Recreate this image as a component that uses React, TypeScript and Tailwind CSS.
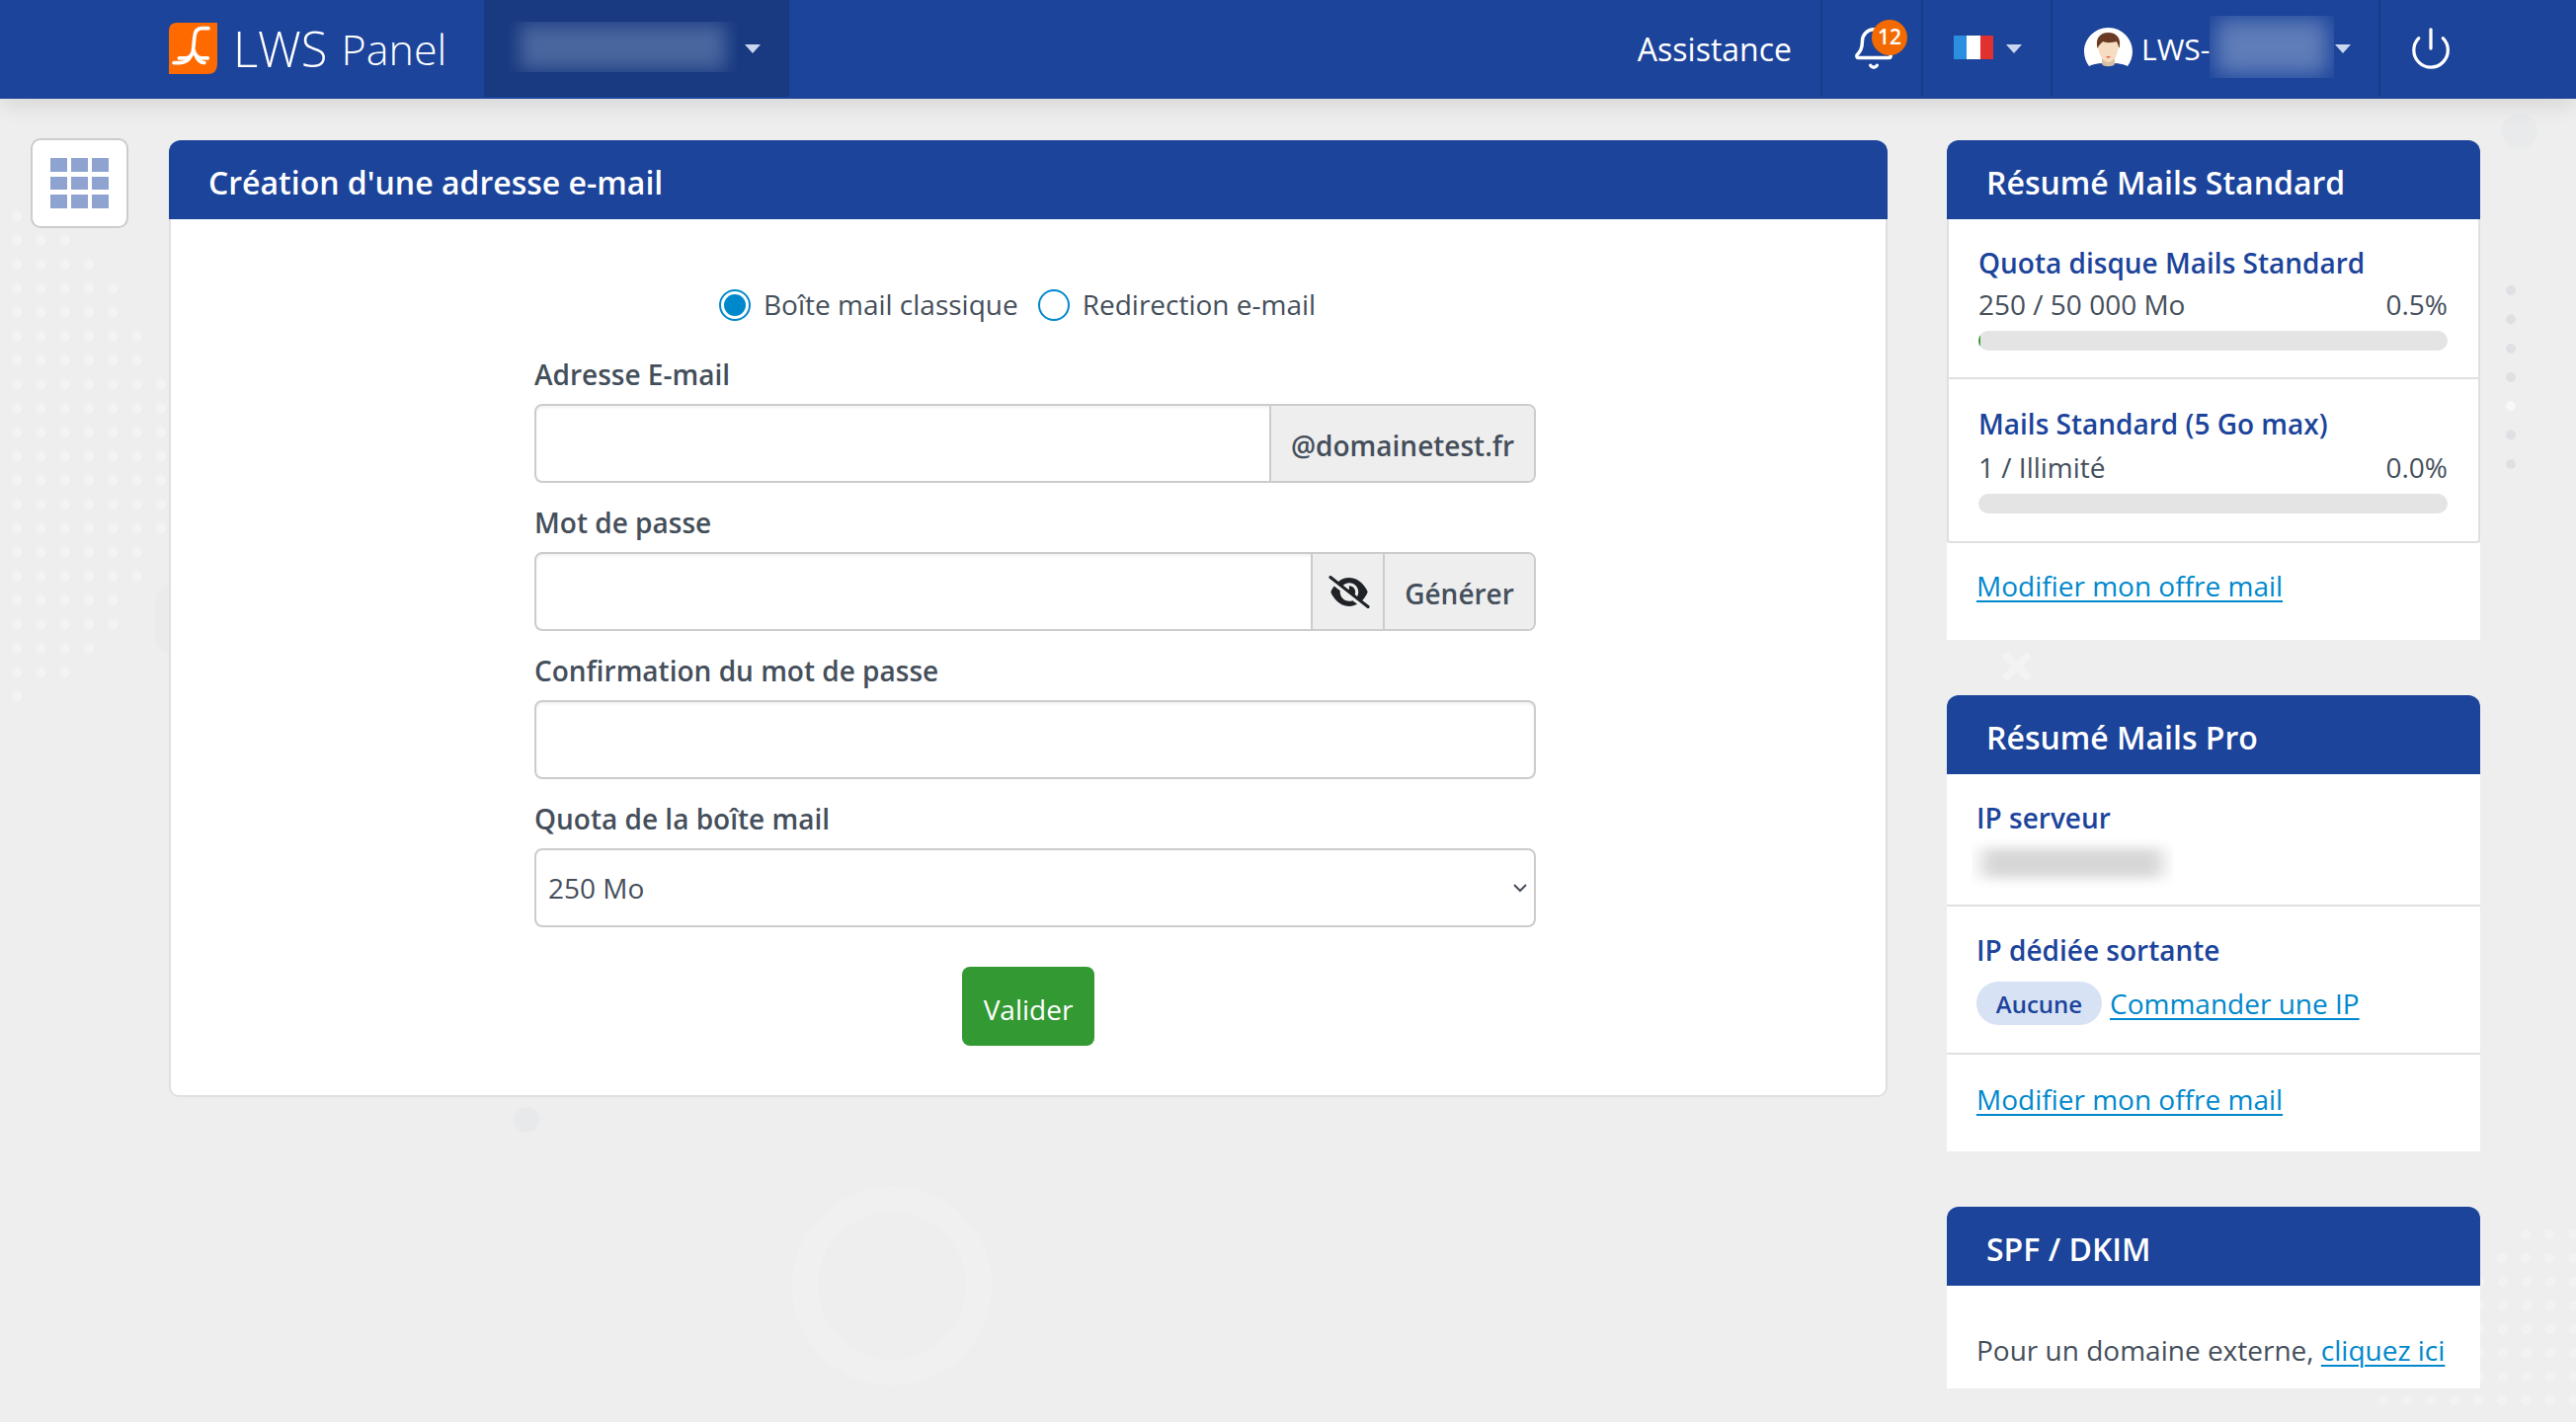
import React from "react";
import { Bell, Power } from "lucide-react";
import { FaEyeSlash } from "react-icons/fa6";

const leftRows = [1, 3, 4, 5, 5, 6, 6, 7, 7, 7, 7, 7, 7, 7, 6, 6, 5, 5, 4, 3, 1];
const rightRows: [number, number][] = [
  [1250, 2557], [1274, 2533], [1298, 2510], [1322, 2510], [1346, 2510], [1370, 2510], [1394, 2510], [1418, 2413],
];

function Decor() {
  const dots: React.ReactNode[] = [];
  leftRows.forEach((n, r) => {
    for (let c = 0; c < n; c++) {
      dots.push(<circle key={`l${r}-${c}`} cx={17 + c * 24.3} cy={219 + r * 24.3} r={5.2} fill="#f3f3f3" />);
    }
  });
  rightRows.forEach(([y, x0], r) => {
    for (let x = x0; x < 2620; x += 24.1) {
      dots.push(<circle key={`r${r}-${x}`} cx={x} cy={y} r={5.2} fill="#f2f2f2" />);
    }
  });
  [294, 323.5, 353, 382, 411, 440.5, 470].forEach((y) => {
    dots.push(<circle key={`c${y}`} cx={2542} cy={y} r={5} fill={y === 411 ? "#f8f8f8" : "#e0e0e4"} />);
  });
  return (
    <svg className="absolute inset-0 pointer-events-none" width="2608" height="1440" viewBox="0 0 2608 1440">
      {dots}
      <circle cx="2551" cy="133" r="18" fill="#e9eaec" />
      <circle cx="533" cy="1134" r="13" fill="#e8e9eb" />
      <circle cx="903" cy="1302" r="88" fill="none" stroke="#f0f0f0" strokeWidth="26" />
      <circle cx="635" cy="1010" r="190" fill="none" stroke="#efefef" strokeWidth="3" />
      <rect x="157" y="592" width="60" height="70" rx="18" fill="#ebebee" />
      <path d="M2032 665l20 20M2052 665l-20 20" stroke="#f3f3f3" strokeWidth="8" strokeLinecap="round" />
    </svg>
  );
}

function Caret() {
  return (
    <svg width="16" height="9" viewBox="0 0 16 9" className="shrink-0">
      <polygon points="0,0 16,0 8,9" fill="#c9d6ef" />
    </svg>
  );
}

function Logo() {
  return (
    <svg width="49" height="52" viewBox="33 35 146 155" className="shrink-0">
      <path d="M58 35H179V160Q179 190 149 190H33V60Q33 35 58 35Z" fill="#ff6a00" />
      <g fill="none" stroke="#fff" strokeWidth="11" strokeLinecap="round">
        <path d="M152 52H132Q112 52 110 80L106 118Q104 138 84 142H64" />
        <path d="M108 118Q112 138 130 142H150" />
        <path d="M100 134Q90 155 66 156H48" />
        <path d="M114 134Q122 155 140 156" />
      </g>
    </svg>
  );
}

function Avatar() {
  return (
    <svg width="51" height="42" viewBox="0 0 51 42" className="shrink-0">
      <path d="M25.5 0C11 0 1 12 1 24c0 6 2 11 5 15 6-3 13-3 19.5-3S39 36 45 39c3-4 5-9 5-15C50 12 40 0 25.5 0Z" fill="#fff" />
      <path d="M7 40c6-4 12-4 18.5-4S38 36 44 40c-5 2-12 2-18.500 2S12 42 7 40Z" fill="#1c449b" />
      <path d="M19 31h13v6c-2 3-11 3-13 0Z" fill="#d8c0a2" />
      <path d="M15 16c0-5 4-7 10.500-7S36 11 36 16c0 9-4 19-10.500 19S15 25 15 16Z" fill="#f6dcc0" />
      <path d="M14.500 21C12 11 17 5 25.500 5S39 11 36.500 21c-1-3-1.500-6-3-7-3 1-10 2-13 0-2 1-4 3-6 7Z" fill="#6b3a22" />
      <rect x="23.500" y="29" width="4" height="1.600" rx="0.800" fill="#e2604a" />
    </svg>
  );
}

function Blur({ className, inner }: { className: string; inner: string }) {
  return (
    <div className={`overflow-hidden shrink-0 ${className}`}>
      <div className={`w-full h-full ${inner}`} />
    </div>
  );
}

function Field({ label, children }: { label: string; children: React.ReactNode }) {
  return (
    <div className="mb-[20px]">
      <label className="block h-[40px] leading-[40px] mb-[10px] text-[28px] font-semibold text-[#454f5b]">{label}</label>
      {children}
    </div>
  );
}

const addon = "flex items-center bg-[#eeeeee] border-l-2 border-[#cccccc] text-[#454f5b] text-[28px]";

function MainCard() {
  return (
    <main className="w-[1740px] shrink-0 self-start">
      <h1 className="h-[80px] rounded-t-[12px] bg-[#1c449b] text-white text-[32px] font-semibold pl-[40px] flex items-center pt-[6px]">
        Création d'une adresse e-mail
      </h1>
      <div className="bg-white border-x-2 border-b-2 border-[#e0e0e0] rounded-b-[10px] pt-[71px] pb-[50px] pl-[368px]">
        <div className="w-[1014px]">
          <div className="flex items-center h-[32px] ml-[187px] mb-[34px] text-[28px] text-[#454f5b]">
            <span className="w-[32px] h-[32px] rounded-full border-2 border-[#0088cc] flex items-center justify-center shrink-0">
              <span className="w-[22px] h-[22px] rounded-full bg-[#0088cc]" />
            </span>
            <span className="ml-[13px] -mt-[3px]">Boîte mail classique</span>
            <span className="ml-[20px] w-[32px] h-[32px] rounded-full border-2 border-[#0088cc] shrink-0" />
            <span className="ml-[13px] -mt-[3px]">Redirection e-mail</span>
          </div>

          <Field label="Adresse E-mail">
            <div className="flex h-[80px] border-2 border-[#cccccc] rounded-[8px] overflow-hidden shadow-[inset_0_2px_3px_rgba(0,0,0,0.06)]">
              <input className="flex-1 min-w-0 outline-none bg-transparent" />
              <div className={`${addon} w-[268px] justify-center font-semibold pt-[4px]`}>@domainetest.fr</div>
            </div>
          </Field>

          <Field label="Mot de passe">
            <div className="flex h-[80px] border-2 border-[#cccccc] rounded-[8px] overflow-hidden shadow-[inset_0_2px_3px_rgba(0,0,0,0.06)]">
              <input className="flex-1 min-w-0 outline-none bg-transparent" />
              <div className={`${addon} w-[73px] justify-center pl-[3px] pt-[1px]`}>
                <FaEyeSlash className="w-[42px] h-[33px] text-[#1f2327]" />
              </div>
              <div className={`${addon} w-[153px] justify-center font-semibold pt-[4px]`}>Générer</div>
            </div>
          </Field>

          <Field label="Confirmation du mot de passe">
            <input className="block w-full h-[80px] border-2 border-[#cccccc] rounded-[8px] outline-none shadow-[inset_0_2px_3px_rgba(0,0,0,0.06)]" />
          </Field>

          <Field label="Quota de la boîte mail">
            <div className="relative">
              <select className="block w-full h-[80px] appearance-none bg-white border-2 border-[#cccccc] rounded-[8px] pl-[12px] text-[28px] text-[#454f5b] outline-none">
                <option>250 Mo</option>
              </select>
              <svg width="14" height="9" viewBox="0 0 14 9" className="absolute right-[9px] top-[36px] pointer-events-none">
                <path d="M1 1l6 6 6-6" fill="none" stroke="#454f5b" strokeWidth="2" />
              </svg>
            </div>
          </Field>

          <button className="block mt-[40px] ml-[433px] w-[134px] h-[80px] rounded-[8px] bg-[#339933] text-white text-[28px] pt-[5px]">
            Valider
          </button>
        </div>
      </div>
    </main>
  );
}

function PanelHead({ children }: { children: React.ReactNode }) {
  return (
    <h2 className="h-[80px] rounded-t-[12px] bg-[#1c449b] text-white text-[32px] font-semibold pl-[40px] flex items-center pt-[6px]">
      {children}
    </h2>
  );
}

function Link({ children }: { children: React.ReactNode }) {
  return <a className="text-[#0088cc] underline underline-offset-[4px] decoration-2 text-[28px]">{children}</a>;
}

function Stat({ title, left, right, pct, top, gap }: { title: string; left: string; right: string; pct: number; top: string; gap: string }) {
  return (
    <div className={top}>
      <div className="h-[42px] leading-[42px] text-[28px] font-semibold text-[#1c449b]">{title}</div>
      <div className={`h-[42px] leading-[42px] flex justify-between text-[28px] text-[#454f5b] ${gap}`}>
        <span>{left}</span>
        <span>{right}</span>
      </div>
      <div className="h-[20px] rounded-full bg-[#e4e4e4] overflow-hidden mt-[6px]">
        <div className="h-full bg-[#339933]" style={{ width: `${pct}%` }} />
      </div>
    </div>
  );
}

function Sidebar() {
  return (
    <aside className="w-[540px] shrink-0 ml-[60px] flex flex-col gap-[56px]">
      <section>
        <PanelHead>Résumé Mails Standard</PanelHead>
        <div className="border-x-2 border-b-2 border-[#e0e0e0] bg-white rounded-b-[4px]">
          <div className="border-b-2 border-[#e0e0e0] pl-[30px] pr-[31px] h-[162px]">
            <Stat title="Quota disque Mails Standard" left="250 / 50 000 Mo" right="0.5%" pct={0.5} top="pt-[23px]" gap="" />
          </div>
          <div className="pl-[30px] pr-[31px] h-[164px]">
            <Stat title="Mails Standard (5 Go max)" left="1 / Illimité" right="0.0%" pct={0} top="pt-[24px]" gap="mt-[2px]" />
          </div>
        </div>
        <div className="bg-white h-[98px] pl-[30px] pt-[22px]">
          <Link>Modifier mon offre mail</Link>
        </div>
      </section>

      <section>
        <PanelHead>Résumé Mails Pro</PanelHead>
        <div className="bg-white">
          <div className="border-b-2 border-[#e0e0e0] h-[134px] pl-[30px] pt-[23px]">
            <div className="h-[42px] leading-[42px] text-[28px] font-semibold text-[#1c449b]">IP serveur</div>
            <Blur className="w-[204px] h-[50px] -ml-[5px]" inner="bg-[#d6d6d6] blur-[10px] scale-x-90 scale-y-60" />
          </div>
          <div className="border-b-2 border-[#e0e0e0] h-[150px] pl-[30px] pt-[23px]">
            <div className="h-[42px] leading-[42px] text-[28px] font-semibold text-[#1c449b]">IP dédiée sortante</div>
            <div className="flex items-center gap-[8px] mt-[11px]">
              <span className="h-[44px] w-[127px] rounded-full bg-[#d8e2f5] text-[#1c449b] text-[24px] font-semibold flex items-center justify-center pt-[2px]">Aucune</span>
              <Link>Commander une IP</Link>
            </div>
          </div>
          <div className="h-[98px] pl-[30px] pt-[24px]">
            <Link>Modifier mon offre mail</Link>
          </div>
        </div>
      </section>

      <section>
        <PanelHead>SPF / DKIM</PanelHead>
        <div className="bg-white h-[104px] pl-[30px] pt-[45px] text-[28px] leading-[40px] text-[#454f5b]">
          Pour un domaine externe, <Link>cliquez ici</Link>
        </div>
      </section>
    </aside>
  );
}

function Header() {
  const seg = "h-[98px] flex items-center border-r-2 border-[#183b86] shrink-0";
  return (
    <header className="relative z-20 h-[100px] bg-[#1c449b] flex shadow-[0_4px_24px_rgba(0,0,0,0.12)] text-white">
      <div className="w-[490px] pl-[171px] flex items-center shrink-0 h-[98px]">
        <Logo />
        <span className="ml-[16px] text-[49px] leading-none font-light">LWS</span>
        <span className="ml-[14px] text-[43px] leading-none font-light">Panel</span>
      </div>
      <div className="w-[309px] h-[98px] bg-[#193a81] flex items-center pl-[25px] shrink-0">
        <Blur className="w-[231px] h-[51px] -mt-[4px]" inner="bg-[#4a669e] blur-[10px] scale-90" />
        <span className="ml-[8px]"><Caret /></span>
      </div>
      <div className="flex-1" />
      <div className={`${seg} pr-[29px] pt-[1px] text-[32px]`}>Assistance</div>
      <div className={`${seg} w-[102px] relative`}>
        <Bell className="ml-[29px] w-[46px] h-[46px]" strokeWidth={1.8} />
        <span className="absolute left-[50px] top-[20px] w-[36px] h-[36px] rounded-full bg-[#f26a00] text-[21px] font-semibold flex items-center justify-center">12</span>
      </div>
      <div className={`${seg} w-[131px] pl-[31px]`}>
        <div className="flex w-[40px] h-[24px] shrink-0 -mt-[2px]">
          <div className="flex-1 bg-[#2b8ee0]" />
          <div className="flex-1 bg-white" />
          <div className="flex-1 bg-[#e03030]" />
        </div>
        <span className="ml-[13px]"><Caret /></span>
      </div>
      <div className={`${seg} w-[332px] pl-[31px]`}>
        <Avatar />
        <span className="ml-[8px] text-[30px]">LWS-</span>
        <Blur className="w-[126px] h-[63px] -mt-[3px]" inner="bg-[#5f7db8] blur-[12px] scale-90" />
        <span className="ml-[1px]"><Caret /></span>
      </div>
      <div className="w-[198px] h-[98px] flex items-center shrink-0">
        <Power className="ml-[28px] w-[46px] h-[46px]" strokeWidth={1.7} />
      </div>
    </header>
  );
}

export default function App() {
  return (
    <div className="relative w-[2608px] h-[1440px] overflow-hidden bg-[#eeeeee]" style={{ fontFamily: '"Open Sans", "Noto Sans", sans-serif' }}>
      <Decor />
      <Header />
      <div className="relative z-10 flex pt-[42px]">
        <div className="w-[171px] shrink-0 pl-[31px] -mt-[2px]">
          <div className="w-[99px] h-[91px] bg-white border-2 border-[#cccccc] rounded-[10px] grid grid-cols-3 grid-rows-3 gap-x-[4px] gap-y-[5px] px-[18px] py-[18px]">
            {Array.from({ length: 9 }).map((_, i) => (
              <div key={i} className="bg-[#8fa3d1]" />
            ))}
          </div>
        </div>
        <MainCard />
        <Sidebar />
      </div>
    </div>
  );
}
